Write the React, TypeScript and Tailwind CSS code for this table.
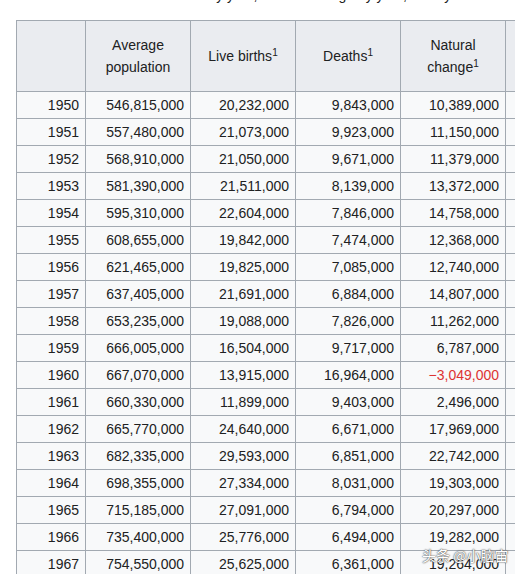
const rows: [string, string, string, string, string][] = [
  ["1950", "546,815,000", "20,232,000", "9,843,000", "10,389,000"],
  ["1951", "557,480,000", "21,073,000", "9,923,000", "11,150,000"],
  ["1952", "568,910,000", "21,050,000", "9,671,000", "11,379,000"],
  ["1953", "581,390,000", "21,511,000", "8,139,000", "13,372,000"],
  ["1954", "595,310,000", "22,604,000", "7,846,000", "14,758,000"],
  ["1955", "608,655,000", "19,842,000", "7,474,000", "12,368,000"],
  ["1956", "621,465,000", "19,825,000", "7,085,000", "12,740,000"],
  ["1957", "637,405,000", "21,691,000", "6,884,000", "14,807,000"],
  ["1958", "653,235,000", "19,088,000", "7,826,000", "11,262,000"],
  ["1959", "666,005,000", "16,504,000", "9,717,000", "6,787,000"],
  ["1960", "667,070,000", "13,915,000", "16,964,000", "\u22123,049,000"],
  ["1961", "660,330,000", "11,899,000", "9,403,000", "2,496,000"],
  ["1962", "665,770,000", "24,640,000", "6,671,000", "17,969,000"],
  ["1963", "682,335,000", "29,593,000", "6,851,000", "22,742,000"],
  ["1964", "698,355,000", "27,334,000", "8,031,000", "19,303,000"],
  ["1965", "715,185,000", "27,091,000", "6,794,000", "20,297,000"],
  ["1966", "735,400,000", "25,776,000", "6,494,000", "19,282,000"],
  ["1967", "754,550,000", "25,625,000", "6,361,000", "19,264,000"],
];

const font = { fontFamily: '"Liberation Sans", Arial, sans-serif' };

export default function App() {
  return (
    <div className="relative w-[515px] h-[574px] overflow-hidden bg-white text-[#202122]" style={font}>
      <div className="h-[20px] overflow-hidden">
        <p className="-mt-[13px] pl-[120px] whitespace-nowrap text-[14px] leading-[16px]">
          Vital statistics by year, natural change by year, fertility
        </p>
      </div>
      <table className="ml-[16px] table-fixed border-collapse text-[14px] bg-[#f8f9fa] w-[600px]">
        <colgroup>
          <col className="w-[69px]" />
          <col className="w-[105px]" />
          <col className="w-[105px]" />
          <col className="w-[105px]" />
          <col className="w-[105px]" />
          <col className="w-[111px]" />
        </colgroup>
        <thead>
          <tr className="h-[71px] bg-[#eaecf0]">
            <th className="border border-[#a2a9b1]"></th>
            <th className="border border-[#a2a9b1] font-normal leading-[22px]">
              Average
              <br />
              population
            </th>
            <th className="border border-[#a2a9b1] font-normal">
              Live births<sup className="text-[10px]">1</sup>
            </th>
            <th className="border border-[#a2a9b1] font-normal">
              Deaths<sup className="text-[10px]">1</sup>
            </th>
            <th className="border border-[#a2a9b1] font-normal leading-[22px]">
              Natural
              <br />
              change<sup className="text-[10px]">1</sup>
            </th>
            <th className="border border-[#a2a9b1] font-normal"></th>
          </tr>
        </thead>
        <tbody>
          {rows.map((r) => (
            <tr key={r[0]} className="h-[27px]">
              {r.map((c, i) => (
                <td
                  key={i}
                  className={`border border-[#a2a9b1] text-right px-[6px] ${
                    c.startsWith("\u2212") ? "text-[#dd3333]" : ""
                  }`}
                >
                  {c}
                </td>
              ))}
              <td className="border border-[#a2a9b1]"></td>
            </tr>
          ))}
        </tbody>
      </table>
      <div
        className="absolute left-[422px] top-[545px] text-[14px] text-white"
        style={{ fontFamily: '"Noto Sans CJK SC", sans-serif', textShadow: "0 0 2px #555, 0 0 1px #333" }}
      >
        头条 @小脑宙
      </div>
    </div>
  );
}
